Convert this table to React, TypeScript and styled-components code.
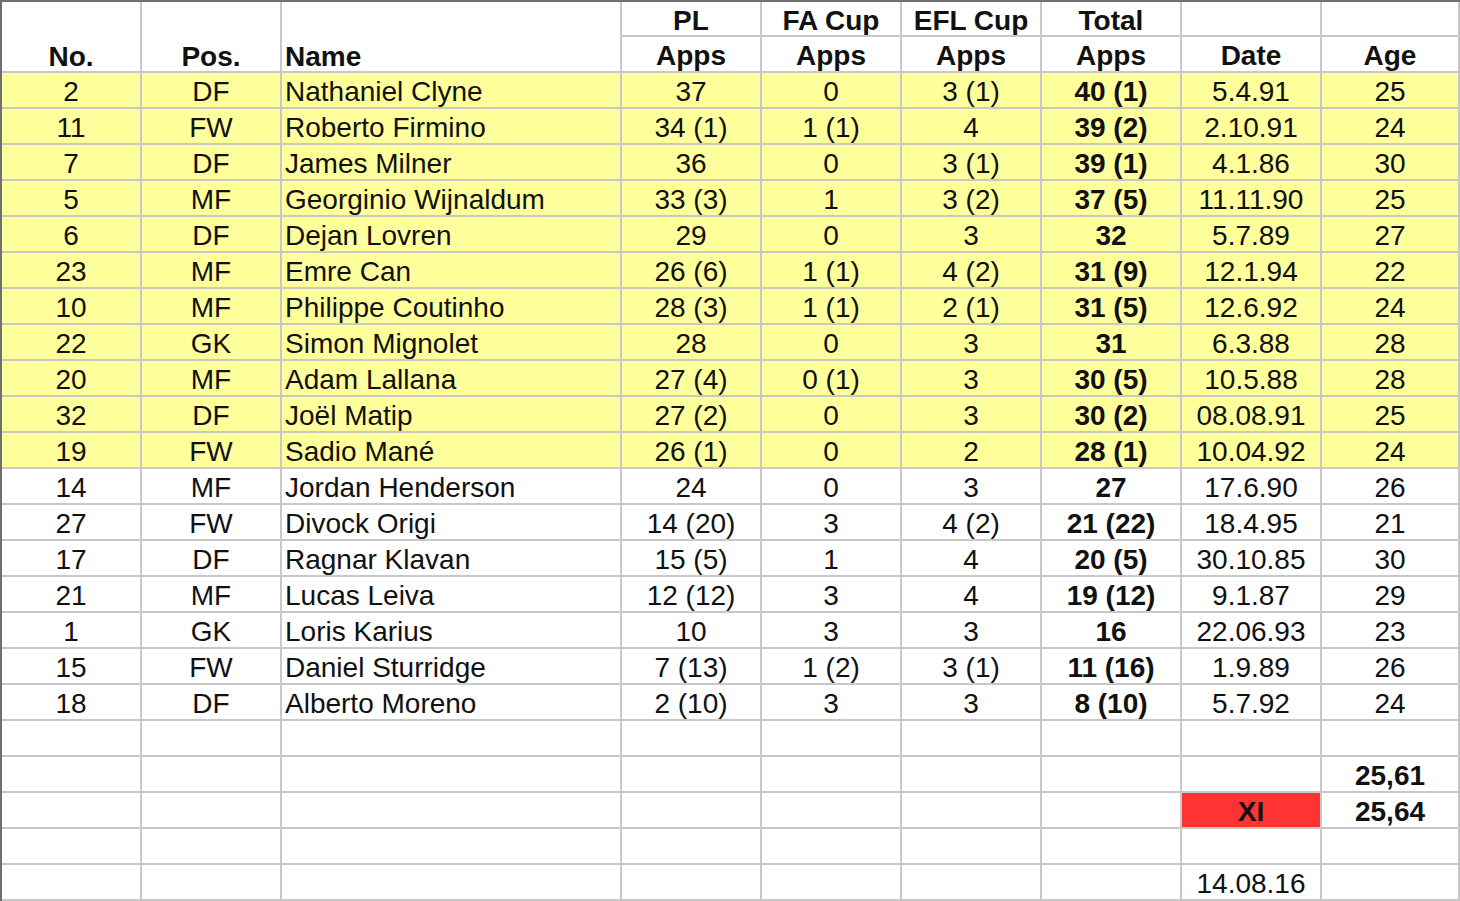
import React from 'react';
import styled, { createGlobalStyle } from 'styled-components';

const GlobalStyle = createGlobalStyle`
  html, body {
    margin: 0;
    padding: 0;
    background: #ffffff;
  }
  body {
    font-family: "Liberation Sans", Arial, sans-serif;
  }
`;

const Sheet = styled.div`
  display: grid;
  grid-template-columns: 140px 140px 340px repeat(5, 140px) 138px;
  grid-template-rows: 35px 36px;
  grid-auto-rows: 36px;
  width: 1460px;
  box-sizing: border-box;
  border-top: 2px solid #6f6f6f;
  border-left: 2px solid #6f6f6f;
  font-size: 28px;
  color: #111111;
  overflow: hidden;
`;

const Cell = styled.div<{ $bg?: string; $bold?: boolean; $left?: boolean; $tall?: boolean }>`
  box-sizing: border-box;
  border-right: 2px solid #c8c8c8;
  border-bottom: 2px solid #c8c8c8;
  background: ${(p) => p.$bg || '#ffffff'};
  font-weight: ${(p) => (p.$bold ? 700 : 400)};
  text-align: ${(p) => (p.$left ? 'left' : 'center')};
  padding-left: ${(p) => (p.$left ? '3px' : '0')};
  line-height: 37px;
  white-space: nowrap;
  overflow: hidden;
  grid-row: ${(p) => (p.$tall ? 'span 2' : 'auto')};
  display: ${(p) => (p.$tall ? 'flex' : 'block')};
  align-items: flex-end;
  justify-content: ${(p) => (p.$left ? 'flex-start' : 'center')};
`;

const HeadText = styled.span`
  display: block;
  line-height: 37px;
  margin-bottom: -4px;
`;

type Player = [string, string, string, string, string, string, string, string, string];

const players: Player[] = [
  ['2', 'DF', 'Nathaniel Clyne', '37', '0', '3 (1)', '40 (1)', '5.4.91', '25'],
  ['11', 'FW', 'Roberto Firmino', '34 (1)', '1 (1)', '4', '39 (2)', '2.10.91', '24'],
  ['7', 'DF', 'James Milner', '36', '0', '3 (1)', '39 (1)', '4.1.86', '30'],
  ['5', 'MF', 'Georginio Wijnaldum', '33 (3)', '1', '3 (2)', '37 (5)', '11.11.90', '25'],
  ['6', 'DF', 'Dejan Lovren', '29', '0', '3', '32', '5.7.89', '27'],
  ['23', 'MF', 'Emre Can', '26 (6)', '1 (1)', '4 (2)', '31 (9)', '12.1.94', '22'],
  ['10', 'MF', 'Philippe Coutinho', '28 (3)', '1 (1)', '2 (1)', '31 (5)', '12.6.92', '24'],
  ['22', 'GK', 'Simon Mignolet', '28', '0', '3', '31', '6.3.88', '28'],
  ['20', 'MF', 'Adam Lallana', '27 (4)', '0 (1)', '3', '30 (5)', '10.5.88', '28'],
  ['32', 'DF', 'Joël Matip', '27 (2)', '0', '3', '30 (2)', '08.08.91', '25'],
  ['19', 'FW', 'Sadio Mané', '26 (1)', '0', '2', '28 (1)', '10.04.92', '24'],
  ['14', 'MF', 'Jordan Henderson', '24', '0', '3', '27', '17.6.90', '26'],
  ['27', 'FW', 'Divock Origi', '14 (20)', '3', '4 (2)', '21 (22)', '18.4.95', '21'],
  ['17', 'DF', 'Ragnar Klavan', '15 (5)', '1', '4', '20 (5)', '30.10.85', '30'],
  ['21', 'MF', 'Lucas Leiva', '12 (12)', '3', '4', '19 (12)', '9.1.87', '29'],
  ['1', 'GK', 'Loris Karius', '10', '3', '3', '16', '22.06.93', '23'],
  ['15', 'FW', 'Daniel Sturridge', '7 (13)', '1 (2)', '3 (1)', '11 (16)', '1.9.89', '26'],
  ['18', 'DF', 'Alberto Moreno', '2 (10)', '3', '3', '8 (10)', '5.7.92', '24'],
];

const STARTERS = 11;
const YELLOW = '#ffff9c';
const RED = '#ff3333';

// the empty rows under the squad, with the average ages and the date
const footer: { date?: string; age?: string; red?: boolean; boldDate?: boolean }[] = [
  {},
  { age: '25,61' },
  { date: 'XI', age: '25,64', red: true, boldDate: true },
  {},
  { date: '14.08.16' },
];

function App(): JSX.Element {
  return (
    <>
      <GlobalStyle />
      <Sheet>
        <Cell $tall $bold><HeadText>No.</HeadText></Cell>
        <Cell $tall $bold><HeadText>Pos.</HeadText></Cell>
        <Cell $tall $bold $left><HeadText>Name</HeadText></Cell>
        <Cell $bold>PL</Cell>
        <Cell $bold>FA Cup</Cell>
        <Cell $bold>EFL Cup</Cell>
        <Cell $bold>Total</Cell>
        <Cell />
        <Cell />

        <Cell $bold>Apps</Cell>
        <Cell $bold>Apps</Cell>
        <Cell $bold>Apps</Cell>
        <Cell $bold>Apps</Cell>
        <Cell $bold>Date</Cell>
        <Cell $bold>Age</Cell>

        {players.map((p, i) => {
          const bg = i < STARTERS ? YELLOW : undefined;
          return (
            <React.Fragment key={p[2]}>
              <Cell $bg={bg}>{p[0]}</Cell>
              <Cell $bg={bg}>{p[1]}</Cell>
              <Cell $bg={bg} $left>{p[2]}</Cell>
              <Cell $bg={bg}>{p[3]}</Cell>
              <Cell $bg={bg}>{p[4]}</Cell>
              <Cell $bg={bg}>{p[5]}</Cell>
              <Cell $bg={bg} $bold>{p[6]}</Cell>
              <Cell $bg={bg}>{p[7]}</Cell>
              <Cell $bg={bg}>{p[8]}</Cell>
            </React.Fragment>
          );
        })}

        {footer.map((f, i) => (
          <React.Fragment key={i}>
            <Cell />
            <Cell />
            <Cell />
            <Cell />
            <Cell />
            <Cell />
            <Cell />
            <Cell $bg={f.red ? RED : undefined} $bold={f.boldDate}>{f.date}</Cell>
            <Cell $bold>{f.age}</Cell>
          </React.Fragment>
        ))}
      </Sheet>
    </>
  );
}

export default App;
